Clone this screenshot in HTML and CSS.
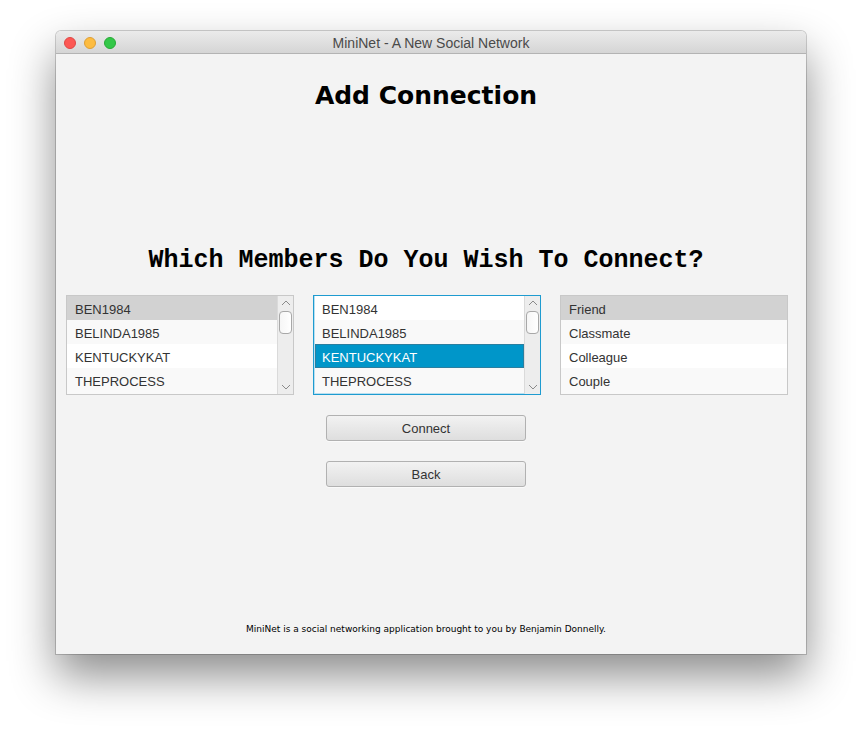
FILE: index.html
```html
<!DOCTYPE html>
<html>
<head>
<meta charset="utf-8">
<title>MiniNet</title>
<link rel="stylesheet" href="styles.css">
</head>
<body>
<div class="window">
  <div class="titlebar">
    <div class="lights">
      <span class="light red"></span>
      <span class="light yellow"></span>
      <span class="light green"></span>
    </div>
    <div class="wintitle">MiniNet - A New Social Network</div>
  </div>
  <div class="content">
    <h1 class="heading">Add Connection</h1>
    <h2 class="question">Which Members Do You Wish To Connect?</h2>
    <div class="lists">
      <div class="list">
        <div class="rows">
          <div class="row sel-grey">BEN1984</div>
          <div class="row odd">BELINDA1985</div>
          <div class="row">KENTUCKYKAT</div>
          <div class="row odd">THEPROCESS</div>
        </div>
        <div class="scrollbar">
          <svg class="arrow" width="10" height="6" viewBox="0 0 10 6"><path d="M1 5 L5 1 L9 5" fill="none" stroke="#8a8a8a" stroke-width="1"/></svg>
          <div class="track"><div class="thumb"></div></div>
          <svg class="arrow" width="10" height="6" viewBox="0 0 10 6"><path d="M1 1 L5 5 L9 1" fill="none" stroke="#8a8a8a" stroke-width="1"/></svg>
        </div>
      </div>
      <div class="list focused">
        <div class="rows">
          <div class="row">BEN1984</div>
          <div class="row odd">BELINDA1985</div>
          <div class="row sel-blue">KENTUCKYKAT</div>
          <div class="row odd">THEPROCESS</div>
        </div>
        <div class="scrollbar">
          <svg class="arrow" width="10" height="6" viewBox="0 0 10 6"><path d="M1 5 L5 1 L9 5" fill="none" stroke="#8a8a8a" stroke-width="1"/></svg>
          <div class="track"><div class="thumb"></div></div>
          <svg class="arrow" width="10" height="6" viewBox="0 0 10 6"><path d="M1 1 L5 5 L9 1" fill="none" stroke="#8a8a8a" stroke-width="1"/></svg>
        </div>
      </div>
      <div class="list">
        <div class="rows">
          <div class="row sel-grey">Friend</div>
          <div class="row odd">Classmate</div>
          <div class="row">Colleague</div>
          <div class="row odd">Couple</div>
        </div>
      </div>
    </div>
    <button class="btn btn-connect">Connect</button>
    <button class="btn btn-back">Back</button>
    <p class="footer">MiniNet is a social networking application brought to you by Benjamin Donnelly.</p>
  </div>
</div>
</body>
</html>
```

FILE: styles.css
```css
html, body {
  margin: 0;
  padding: 0;
  background: #ffffff;
}
body {
  width: 862px;
  height: 734px;
  overflow: hidden;
  padding: 31px 0 0 56px;
  box-sizing: border-box;
}
.window {
  width: 750px;
  height: 623px;
  border-radius: 5px 5px 0 0;
  background: #f3f3f3;
  box-shadow: 0 22px 45px rgba(0,0,0,0.45), 0 0 0 1px rgba(0,0,0,0.18);
  display: flex;
  flex-direction: column;
  overflow: hidden;
}
.titlebar {
  height: 22px;
  flex: none;
  border-bottom: 1px solid #b3b3b3;
  background: linear-gradient(#ebebeb, #d5d5d5);
  border-radius: 5px 5px 0 0;
  display: flex;
  align-items: center;
  position: relative;
}
.lights {
  display: flex;
  gap: 8px;
  padding-left: 8px;
  padding-top: 1px;
}
.light {
  width: 12px;
  height: 12px;
  border-radius: 50%;
  display: block;
  box-sizing: border-box;
}
.red { background: #fc5753; border: 1px solid #df4744; }
.yellow { background: #fdbc40; border: 1px solid #de9f34; }
.green { background: #33c748; border: 1px solid #27aa35; }
.wintitle {
  position: absolute;
  left: 0;
  right: 0;
  top: 0;
  line-height: 24px;
  text-align: center;
  font-family: "Liberation Sans", Arial, sans-serif;
  font-size: 14px;
  color: #4a4a4a;
  pointer-events: none;
}
.content {
  flex: 1;
  display: flex;
  flex-direction: column;
  align-items: center;
  padding: 0 20px 0 10px;
}
.heading {
  margin: 26px 0 0;
  font-family: "DejaVu Sans", Verdana, sans-serif;
  font-weight: bold;
  font-size: 25px;
  line-height: 32px;
  color: #000;
}
.question {
  margin: 134px 0 0;
  font-family: "Liberation Mono", "Courier New", monospace;
  font-weight: bold;
  font-size: 25px;
  line-height: 30px;
  color: #000;
}
.lists {
  margin-top: 19px;
  display: flex;
  gap: 19px;
  align-self: flex-start;
}
.list {
  width: 228px;
  height: 100px;
  flex: none;
  box-sizing: border-box;
  border: 1px solid #c8c8c8;
  background: #f9f9f9;
  display: flex;
}
.list.focused {
  border-color: #1e9bd0;
  box-shadow: inset 0 0 0 1px #b9dff0;
}
.rows {
  flex: 1;
  display: flex;
  flex-direction: column;
}
.row {
  height: 24px;
  flex: none;
  box-sizing: border-box;
  padding-top: 2px;
  line-height: 23px;
  padding-left: 8px;
  font-family: "Liberation Sans", Arial, sans-serif;
  font-size: 13px;
  color: #333;
  background: #ffffff;
}
.row.odd { background: #f9f9f9; }
.row.sel-grey { background: #d2d2d2; }
.row.sel-blue {
  background: #0096c9;
  color: #fff;
  box-shadow: inset 0 0 0 1px #2a7fa0;
}
.focused .rows { padding: 0 0 0 1px; }
.focused .row { padding-left: 7px; }
.scrollbar {
  width: 16px;
  box-sizing: border-box;
  border-left: 1px solid #dadada;
  background: #ededed;
  display: flex;
  flex-direction: column;
  align-items: center;
}
.arrow {
  flex: none;
  margin: 4px 0;
}
.track {
  flex: 1;
  align-self: stretch;
  padding: 0 1px;
}
.thumb {
  margin-top: 1px;
  height: 23px;
  box-sizing: border-box;
  border: 1px solid #a8a8a8;
  border-radius: 4px;
  background: linear-gradient(90deg, #f6f6f6, #ffffff);
}
.btn {
  width: 200px;
  height: 26px;
  box-sizing: border-box;
  border: 1px solid #b1b1b1;
  border-radius: 3px;
  background: linear-gradient(#f2f2f2, #dedede);
  font-family: "Liberation Sans", Arial, sans-serif;
  font-size: 13px;
  color: #333;
  padding: 0;
  display: block;
  box-shadow: 0 1px 0 rgba(255,255,255,0.6);
}
.btn-connect { margin-top: 20px; }
.btn-back { margin-top: 20px; }
.footer {
  margin: 135px 0 0;
  font-family: "DejaVu Sans", Verdana, sans-serif;
  font-size: 9px;
  line-height: 14px;
  color: #000;
}
```
